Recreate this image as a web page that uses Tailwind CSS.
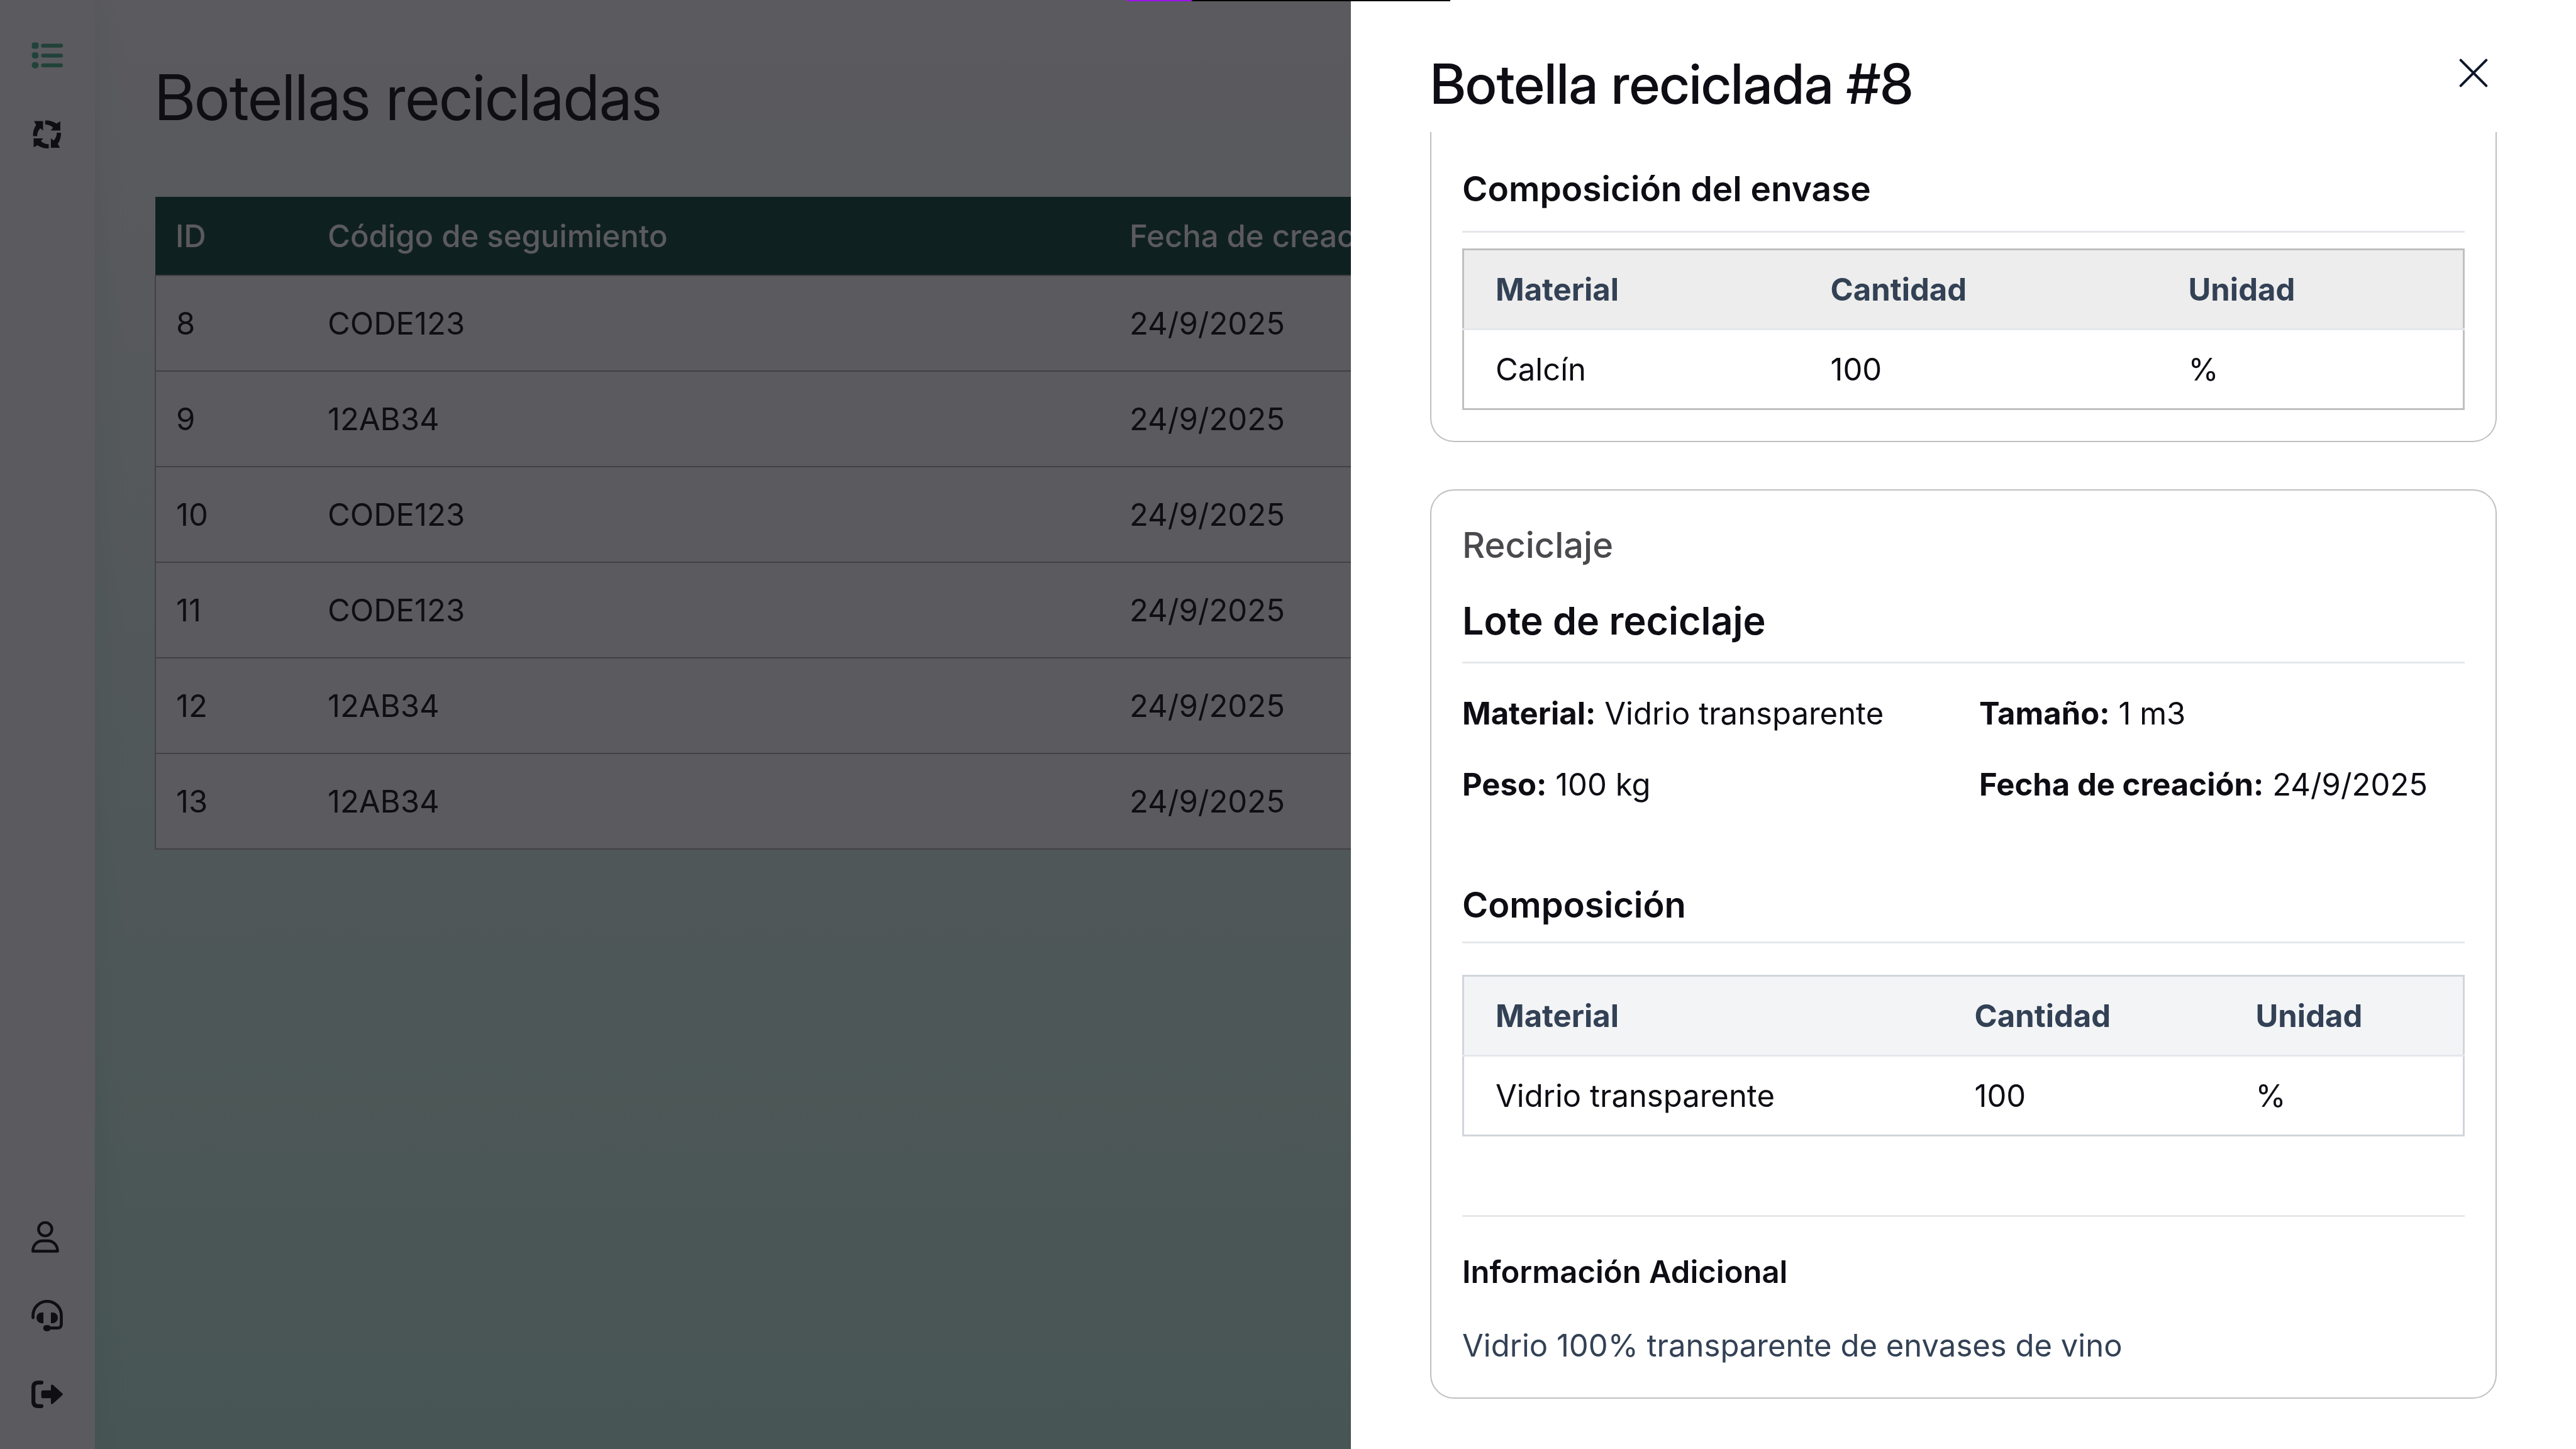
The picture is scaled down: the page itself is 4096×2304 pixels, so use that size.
<!DOCTYPE html>
<html lang="es">
<head>
<meta charset="utf-8">
<title>Botellas recicladas</title>
<script src="https://cdn.jsdelivr.net/npm/@tailwindcss/browser@4"></script>
</head>
<body class="relative flex h-screen overflow-hidden bg-white font-[Inter,sans-serif] text-[49px] leading-[75px] text-black">

<!-- Sidebar -->
<nav class="z-10 flex w-[151px] shrink-0 flex-col justify-between bg-white pt-[63px] pb-[62px] pl-[50px] shadow-[0_0_50px_rgba(60,170,120,0.14)]" aria-label="Principal">
  <div class="flex flex-col gap-[76px]">
    <a href="#" aria-label="Botellas" class="text-[#3fb082]">
      <svg class="size-[50px]" viewBox="0 0 16 16" fill="currentColor"><rect x="0.200" y="1.400" width="3.400" height="3.200" rx="1"/><rect x="0.200" y="6.400" width="3.400" height="3.200" rx="1.400"/><rect x="0.200" y="11.400" width="3.400" height="3.200" rx="1.400"/><rect x="4.900" y="2.100" width="11.200" height="2" rx="1"/><rect x="4.900" y="7.100" width="11.200" height="2" rx="1"/><rect x="4.900" y="12.100" width="11.200" height="2" rx="1"/></svg>
    </a>
    <a href="#" aria-label="Reciclaje">
      <svg class="size-[50px]" viewBox="0 0 16 16" fill="currentColor"><g id="arrow"><path d="M7 .8C9.100.7 11 1.200 12.700 2.400L14.700 1.300V5.900H9.800L11 4.500C9.900 3.400 8.600 2.900 7 2.900Z"/></g><use href="#arrow" transform="rotate(90 7.900 7.900)"/><use href="#arrow" transform="rotate(180 7.900 7.900)"/><use href="#arrow" transform="rotate(270 7.900 7.900)"/></svg>
    </a>
  </div>
  <div class="flex flex-col gap-[75px]">
    <a href="#" aria-label="Perfil">
      <svg class="size-[50px]" viewBox="0 0 16 16" fill="none" stroke="currentColor" stroke-width="1.400"><circle cx="7" cy="4" r="3.400"/><path d="M.7 15.200C.7 12 3 9.900 5.600 9.900H8.400C11 9.900 13.300 12 13.300 15.200Z" stroke-linejoin="round"/></svg>
    </a>
    <a href="#" aria-label="Soporte">
      <svg class="size-[50px]" viewBox="0 0 16 16" fill="none" stroke="currentColor" stroke-width="1.500" stroke-linecap="round"><path d="M.8 9V7.900A7.200 7.200 0 0 1 15.200 7.900V12.200Q15.200 14.300 13.100 14.300H8"/><g fill="currentColor" stroke="none"><path d="M6.100 6.400V11.800H5.100A2.500 2.500 0 0 1 2.600 9.300V8.900A2.500 2.500 0 0 1 5.100 6.400Z"/><path d="M9.900 6.400V11.800H10.900A2.500 2.500 0 0 0 13.400 9.300V8.900A2.500 2.500 0 0 0 10.900 6.400Z"/><rect x="6" y="12.800" width="3.800" height="3.100" rx="1.500"/></g></svg>
    </a>
    <a href="#" aria-label="Salir">
      <svg class="size-[50px]" viewBox="0 0 16 16" fill="currentColor"><path d="M5.100 2H3.400Q1 2 1 4.400V11.600Q1 14 3.400 14H5.100" fill="none" stroke="currentColor" stroke-width="2" stroke-linecap="round"/><path d="M5.900 6H9.900V3.800Q9.900 2.600 10.900 3.200L15.700 7.500Q16.200 8 15.700 8.500L10.900 12.800Q9.900 13.400 9.900 12.200V10H5.900Q5 10 5 9.100V6.900Q5 6 5.900 6Z"/></svg>
    </a>
  </div>
</nav>

<!-- List page -->
<main class="min-w-0 flex-1 bg-linear-to-b from-white to-[#bcefdd] px-[95px] pt-[80px]">
  <h1 class="mb-[83px] font-['Inter_Display',Inter,sans-serif] text-[100px] leading-[150px]">Botellas recicladas</h1>
  <table class="w-full table-fixed border-collapse bg-white text-left">
    <colgroup><col class="w-[242px]"><col class="w-[1275px]"><col></colgroup>
    <thead class="bg-[#003d32] text-white">
      <tr class="h-[125px]"><th class="px-[32px] font-medium">ID</th><th class="px-[32px] font-medium">Código de seguimiento</th><th class="px-[32px] font-medium">Fecha de creación</th></tr>
    </thead>
    <tbody class="border-2 border-[#a8a8a8] [&>tr]:h-[152px] [&>tr]:border-b-2 [&>tr]:border-[#a8a8a8] [&_td]:px-[32px]">
      <tr><td>8</td><td>CODE123</td><td>24/9/2025</td></tr>
      <tr><td>9</td><td>12AB34</td><td>24/9/2025</td></tr>
      <tr><td>10</td><td>CODE123</td><td>24/9/2025</td></tr>
      <tr><td>11</td><td>CODE123</td><td>24/9/2025</td></tr>
      <tr><td>12</td><td>12AB34</td><td>24/9/2025</td></tr>
      <tr><td>13</td><td>12AB34</td><td>24/9/2025</td></tr>
    </tbody>
  </table>
</main>

<!-- Backdrop -->
<div class="absolute inset-0 z-20 bg-[#16141a]/70"></div>

<!-- Detail drawer -->
<aside class="absolute inset-y-0 right-0 z-30 flex w-[1948px] flex-col overflow-hidden bg-white px-[126px] text-[#0e0d14]" role="dialog" aria-labelledby="drawer-title">
  <header class="flex h-[210px] shrink-0 items-start justify-between">
    <h2 id="drawer-title" class="pt-[67px] font-['Inter_Display',Inter,sans-serif] text-[88px] font-medium leading-[132px]">Botella reciclada #8</h2>
    <button type="button" aria-label="Cerrar" class="mt-[91px] mr-[12px] text-[#0f172a]">
      <svg class="size-[50px]" viewBox="0 0 16 16" fill="none" stroke="currentColor" stroke-width="1.300" stroke-linecap="round"><path d="M1.500 1.500L14.500 14.500M14.500 1.500L1.500 14.500"/></svg>
    </button>
  </header>

  <section class="rounded-b-[38px] border-2 border-t-0 border-[#c0c0c0] px-[49px] pt-[48px] pb-[49px]">
    <h3 class="border-b-3 border-[#e5e7eb] pb-[25px] text-[55px] font-semibold leading-[84px]">Composición del envase</h3>
    <table class="mt-[25px] w-full table-fixed border-collapse border-3 border-[#c0c0c0] text-left">
      <colgroup><col class="w-[534px]"><col class="w-[569px]"><col></colgroup>
      <thead class="bg-[#ededed] text-[#334155]">
        <tr class="h-[127px] border-b-3 border-[#e5e7eb]"><th class="px-[50px] font-bold">Material</th><th class="px-[50px] font-bold">Cantidad</th><th class="px-[50px] font-bold">Unidad</th></tr>
      </thead>
      <tbody>
        <tr class="h-[127px]"><td class="px-[50px]">Calcín</td><td class="px-[50px]">100</td><td class="px-[50px]">%</td></tr>
      </tbody>
    </table>
  </section>

  <section class="mt-[75px] rounded-[38px] border-2 border-[#c0c0c0] px-[49px] pt-[49px] pb-[45px]">
    <p class="text-[56px] font-medium leading-[76px] text-[#4a4a4e]">Reciclaje</p>
    <h3 class="mt-[36px] border-b-3 border-[#e5e7eb] pb-[18px] text-[61px] font-semibold leading-[93px]">Lote de reciclaje</h3>
    <div class="mt-[42px] grid grid-cols-[822px_1fr] gap-y-[38px]">
      <p><strong class="font-bold">Material:</strong> Vidrio transparente</p>
      <p><strong class="font-bold">Tamaño:</strong> 1 m3</p>
      <p><strong class="font-bold">Peso:</strong> 100 kg</p>
      <p><strong class="font-bold">Fecha de creación:</strong> 24/9/2025</p>
    </div>
    <h4 class="mt-[112px] border-b-3 border-[#e5e7eb] pb-[16px] text-[56px] font-semibold leading-[84px]">Composición</h4>
    <table class="mt-[50px] w-full table-fixed border-collapse border-3 border-[#d1d5db] text-left">
      <colgroup><col class="w-[763px]"><col class="w-[447px]"><col></colgroup>
      <thead class="bg-[#f3f4f6] text-[#334155]">
        <tr class="h-[127px] border-b-3 border-[#e5e7eb]"><th class="px-[50px] font-bold">Material</th><th class="px-[50px] font-bold">Cantidad</th><th class="px-[50px] font-bold">Unidad</th></tr>
      </thead>
      <tbody>
        <tr class="h-[127px]"><td class="px-[50px]">Vidrio transparente</td><td class="px-[50px]">100</td><td class="px-[50px]">%</td></tr>
      </tbody>
    </table>
    <div class="mt-[125px] border-t-3 border-[#e5e7eb] pt-[50px]">
      <h4 class="font-semibold">Información Adicional</h4>
      <p class="mt-[42px] text-[#334155]">Vidrio 100% transparente de envases de vino</p>
    </div>
  </section>
</aside>

<!-- Loading bar -->
<div class="absolute top-0 left-[1792px] z-40 flex h-[2px] w-[514px] bg-black"><span class="w-[103px] bg-[#a010f0]"></span></div>
</body>
</html>
